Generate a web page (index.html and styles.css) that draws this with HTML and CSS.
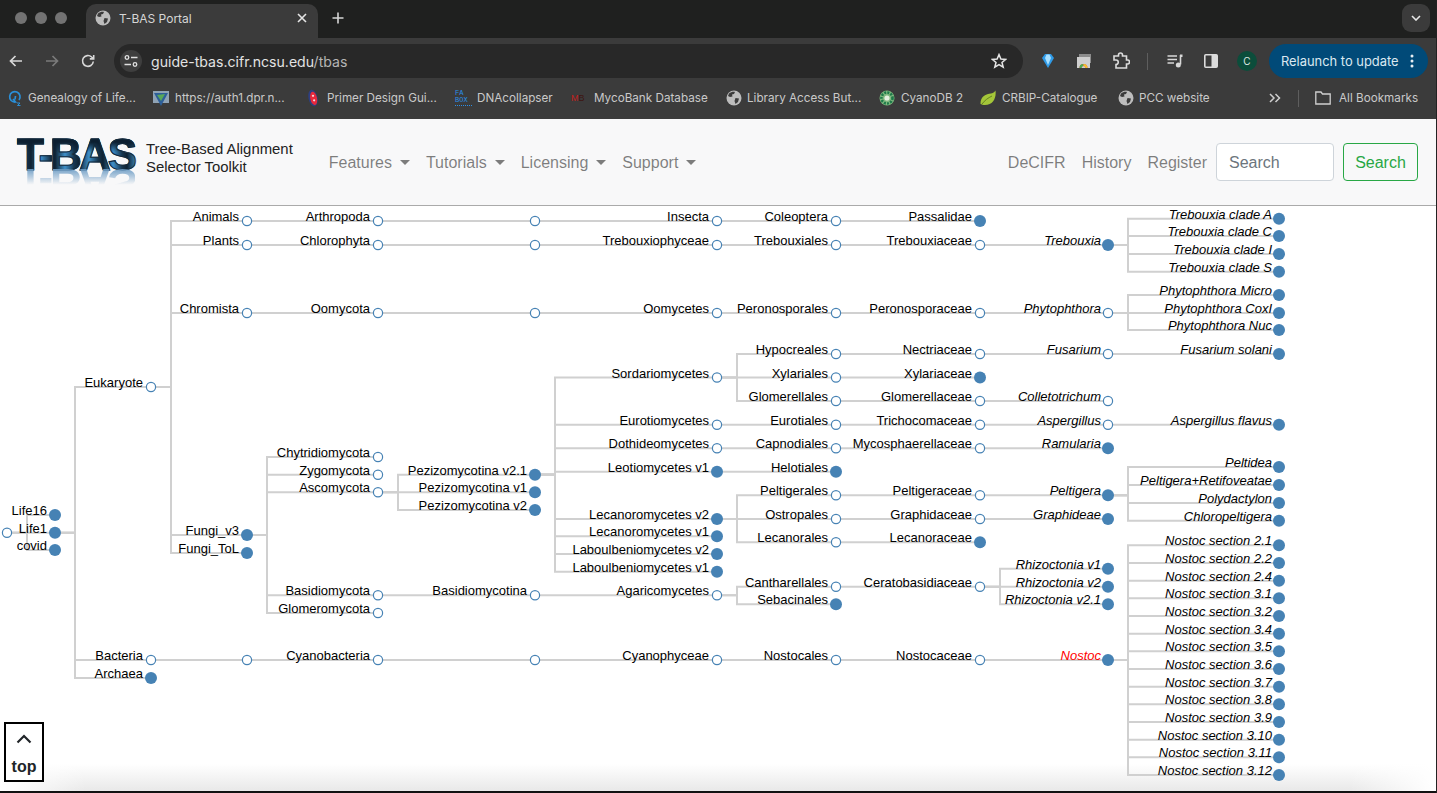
FILE: index.html
```html
<!DOCTYPE html>
<html>
<head>
    <title>T-BAS Portal</title>
    <link rel="stylesheet" href="styles.css">
</head>
<body>
    <svg class="defs" width="0" height="0">
        <symbol id="globe" viewBox="0 0 16 16">
            <circle cx="8" cy="8" r="7.5" fill="#bdbdbd"/>
            <path d="M3 3.5 C5 2 7 1.5 9 2 L8 4 L6 4.5 L6.5 6.5 L4 7 L2 6 Z M9.5 8 L13 8.5 L12 12 L9.5 14 L8.5 11 Z" fill="#3c3c3c"/>
        </symbol>
    </svg>

    <div class="tabstrip">
        <div class="lights"><i></i><i></i><i></i></div>
        <div class="tab">
            <svg class="ico16"><use href="#globe"/></svg>
            <span class="tab-title">T-BAS Portal</span>
            <svg class="tab-close" viewBox="0 0 10 10"><path d="M1 1 L9 9 M9 1 L1 9" stroke="#e6e6e6" stroke-width="1.6"/></svg>
        </div>
        <svg class="tab-new" viewBox="0 0 12 12"><path d="M6 0.5 V11.5 M0.5 6 H11.5" stroke="#d6d6d6" stroke-width="1.6"/></svg>
        <div class="tab-menu">
            <svg viewBox="0 0 10 6" width="10" height="6"><path d="M1 1 L5 5 L9 1" fill="none" stroke="#e6e6e6" stroke-width="1.6"/></svg>
        </div>
    </div>

    <div class="toolbar">
        <svg class="tool" viewBox="0 0 16 16"><path d="M14 8 H2.5 M7.5 3 L2.5 8 L7.5 13" fill="none" stroke="#d8d8d8" stroke-width="1.7"/></svg>
        <svg class="tool" viewBox="0 0 16 16"><path d="M2 8 H13.5 M8.5 3 L13.5 8 L8.5 13" fill="none" stroke="#7b7b7b" stroke-width="1.7"/></svg>
        <svg class="tool" viewBox="0 0 16 16"><path d="M13.3 8.5 A5.4 5.4 0 1 1 11.6 4 L13.5 5.6 M13.7 2 V5.9 H9.8" fill="none" stroke="#d8d8d8" stroke-width="1.6"/></svg>
        <div class="omnibox">
            <span class="site-btn">
                <svg viewBox="0 0 14 12" width="14" height="12"><circle cx="3" cy="2.5" r="1.8" fill="none" stroke="#e0e0e0" stroke-width="1.3"/><path d="M7 2.5 H13.5 M0.5 9.5 H7" stroke="#e0e0e0" stroke-width="1.4"/><circle cx="11" cy="9.5" r="1.8" fill="none" stroke="#e0e0e0" stroke-width="1.3"/></svg>
            </span>
            <span class="url">guide-tbas.cifr.ncsu.edu<span class="url-path">/tbas</span></span>
            <svg class="star" viewBox="0 0 16 16"><path d="M8 1.6 L9.9 6 L14.7 6.4 L11 9.5 L12.2 14.2 L8 11.7 L3.8 14.2 L5 9.5 L1.3 6.4 L6.1 6 Z" fill="none" stroke="#e6e6e6" stroke-width="1.5"/></svg>
        </div>
        <div class="ext">
            <svg class="ext-diamond" viewBox="0 0 14 16"><path d="M1 5 L4 1 H10 L13 5 L7 15 Z" fill="#2f9be8"/><path d="M4 5 L5.5 1.5 H8.5 L10 5 L7 12 Z" fill="#a9e0ff"/></svg>
            <svg class="ext-window" viewBox="0 0 16 16"><rect x="3" y="1" width="12" height="9" fill="#8c8c8c"/><rect x="1" y="4" width="13" height="11" fill="#cfcfcf"/><path d="M3.5 15 A4 4 0 0 1 11.5 15 H9.5 A2 2 0 0 0 5.5 15 Z" fill="#e8453c"/><path d="M3.5 15 A4 4 0 0 1 7.5 11 V13 A2 2 0 0 0 5.5 15 Z" fill="#4aae54"/><path d="M7.5 11 A4 4 0 0 1 11.5 15 H9.5 A2 2 0 0 0 7.5 13 Z" fill="#f5c02e"/></svg>
            <svg class="ext-puzzle" viewBox="0 0 18 18"><path d="M2 4 H6.5 V3 A2 2 0 0 1 10.5 3 V4 H14.5 V8 H15.5 A2 2 0 0 1 15.5 12 H14.5 V16 H4 V12.5 A2.2 2.2 0 0 0 4 8 H2 Z" fill="none" stroke="#dcdcdc" stroke-width="1.6"/></svg>
            <span class="ext-sep"></span>
            <svg class="ext-queue" viewBox="0 0 16 14"><path d="M0.5 2 H10 M0.5 5.5 H10 M0.5 9 H7" stroke="#d8d8d8" stroke-width="1.5"/><path d="M13.5 1 V10.5" stroke="#d8d8d8" stroke-width="1.6"/><path d="M13 0.5 H15.5 V3 H13 Z" fill="#d8d8d8"/><circle cx="11.3" cy="11" r="2.5" fill="#d8d8d8"/></svg>
            <svg class="ext-panel" viewBox="0 0 14 14"><rect x="0.8" y="0.8" width="12.4" height="12.4" rx="1" fill="none" stroke="#dcdcdc" stroke-width="1.6"/><rect x="7.5" y="1" width="5.5" height="12" fill="#dcdcdc"/></svg>
            <span class="avatar">C</span>
        </div>
        <div class="relaunch">
            <span>Relaunch to update</span>
            <svg viewBox="0 0 4 14" width="4" height="14"><circle cx="2" cy="2" r="1.5" fill="#e8eef3"/><circle cx="2" cy="7" r="1.5" fill="#e8eef3"/><circle cx="2" cy="12" r="1.5" fill="#e8eef3"/></svg>
        </div>
    </div>

    <div class="bookmarks">
        <a class="bm bm-1"><svg class="ico14" viewBox="0 0 14 16"><path d="M11 10 A5.2 5.2 0 1 0 7.5 12 L5 9 M7.5 6 L7 9.5" fill="none" stroke="#2a8fd8" stroke-width="1.7"/><path d="M9 13 H12 L9.5 15.5 H12.5" fill="none" stroke="#2a8fd8" stroke-width="1"/></svg>Genealogy of Life...</a>
        <a class="bm bm-2"><svg class="ico16" viewBox="0 0 16 16"><rect x="0" y="1" width="16" height="12" fill="#8fa3b5"/><path d="M1 3 L8 16 L15 3 Z" fill="#2d5f9a"/><path d="M4 5 L12 4 L8 11 Z" fill="#58a85a"/></svg>https://auth1.dpr.n...</a>
        <a class="bm bm-3"><svg class="ico12" viewBox="0 0 10 16"><ellipse cx="5" cy="8" rx="4" ry="7.5" fill="#2e3f80" transform="rotate(-12 5 8)"/><ellipse cx="5.5" cy="8.5" rx="3" ry="6" fill="#e8283c" transform="rotate(-12 5 8)"/><circle cx="5" cy="6" r="1" fill="#f6d8dc"/><circle cx="6" cy="10" r="1" fill="#f6d8dc"/></svg>Primer Design Gui...</a>
        <a class="bm bm-4"><span class="fabox">FA<br>BOX</span>DNAcollapser</a>
        <a class="bm bm-5"><span class="mb"><b>M</b><i>B</i></span>MycoBank Database</a>
        <a class="bm bm-6"><svg class="ico16"><use href="#globe"/></svg>Library Access But...</a>
        <a class="bm bm-7"><svg class="ico16" viewBox="0 0 16 16"><circle cx="8" cy="8" r="7.5" fill="#7fb77e"/><circle cx="8" cy="8" r="5.5" fill="none" stroke="#1e7a4a" stroke-width="2.6" stroke-dasharray="2 1.2"/><circle cx="8" cy="8" r="2.6" fill="#e6efe0"/></svg>CyanoDB 2</a>
        <a class="bm bm-8"><svg class="ico16" viewBox="0 0 16 16"><path d="M0.5 14 C0.5 6 6 4 11 3.5 C13.5 3 15 1.5 15.5 0.5 C16.5 8 13 15 5 15 C3 15 1.5 14.5 0.5 14 Z" fill="#a4c639"/><path d="M2 14 C5 10 8 8 12 6" fill="none" stroke="#55701a" stroke-width="0.8"/></svg>CRBIP-Catalogue</a>
        <a class="bm bm-9"><svg class="ico16"><use href="#globe"/></svg>PCC website</a>
        <svg class="bm-more" viewBox="0 0 12 10"><path d="M1 1 L5 5 L1 9 M6.5 1 L10.5 5 L6.5 9" fill="none" stroke="#cfcfcf" stroke-width="1.5"/></svg>
        <span class="bm-sep"></span>
        <a class="bm bm-all"><svg class="ico16" viewBox="0 0 16 14"><path d="M0.8 1 H6 L7.5 3 H15.2 V13 H0.8 Z" fill="none" stroke="#cfcfcf" stroke-width="1.3"/></svg>All Bookmarks</a>
    </div>

    <nav class="navbar">
        <a class="brand">
            <span class="logo">
                <span class="logo-main">T-BAS</span>
            </span>
            <span class="brand-text">Tree-Based Alignment<br>Selector Toolkit</span>
        </a>
        <ul class="nav-left">
            <li class="caret">Features</li>
            <li class="caret">Tutorials</li>
            <li class="caret">Licensing</li>
            <li class="caret">Support</li>
        </ul>
        <ul class="nav-right">
            <li>DeCIFR</li>
            <li>History</li>
            <li>Register</li>
        </ul>
        <form class="search">
            <input type="text" placeholder="Search">
            <button type="button">Search</button>
        </form>
    </nav>

    <div class="content">
        <div class="fade"></div>
        <svg id="tree" viewBox="0 206 1437 587" width="1437" height="587"></svg>
        <a class="top-btn">
            <svg viewBox="0 0 16 10" width="16" height="10"><path d="M1.5 8.5 L8 2 L14.5 8.5" fill="none" stroke="#212529" stroke-width="2.2"/></svg>
            <span>top</span>
        </a>
    </div>

    <script src="tree.js"></script>
</body>
</html>
```

FILE: styles.css
```css
* {
    box-sizing: border-box;
}
html, body {
    margin: 0;
    height: 793px;
    overflow: hidden;
}
body {
    font-family: "Liberation Sans", Arial, sans-serif;
    background-color: #fff;
    border-right: 1px solid #222;
}
.defs {
    position: absolute;
}
.ico16 {
    width: 16px;
    height: 16px;
    flex: none;
}
.ico14 {
    width: 14px;
    height: 16px;
    flex: none;
}
.ico12 {
    width: 12px;
    height: 18px;
    flex: none;
}

/* tab strip */
.tabstrip {
    height: 38px;
    background-color: #1f201f;
    display: flex;
    align-items: flex-end;
    padding-left: 15px;
}
.lights {
    display: flex;
    gap: 8px;
    width: 71px;
    align-self: center;
    margin-top: -2px;
}
.lights i {
    width: 12px;
    height: 12px;
    border-radius: 50%;
    background-color: #737373;
}
.tab {
    width: 232px;
    height: 34px;
    background-color: #3b3b3b;
    border-radius: 10px 10px 0 0;
    display: flex;
    align-items: center;
    padding: 0 11px 6px 9px;
    color: #d6d6d6;
}
.tab-title {
    font: 12px "Inter", sans-serif;
    margin-left: 8px;
    flex: 1;
}
.tab-close {
    width: 10px;
    height: 10px;
}
.tab-new {
    width: 12px;
    height: 12px;
    margin: 0 0 14px 14px;
}
.tab-menu {
    margin: 0 6px 6px auto;
    width: 28px;
    height: 28px;
    border-radius: 9px;
    background-color: #3b3b3b;
    display: flex;
    align-items: center;
    justify-content: center;
}

/* address bar */
.toolbar {
    height: 41px;
    background-color: #3b3b3b;
    display: flex;
    align-items: center;
    padding: 5px 8px 0 8px;
}
.tool {
    width: 16px;
    height: 16px;
    margin-right: 20px;
    flex: none;
}
.tool:nth-of-type(3) {
    margin-right: 18px;
}
.omnibox {
    width: 909px;
    height: 34px;
    background-color: #282828;
    border-radius: 17px;
    display: flex;
    align-items: center;
    padding: 0 16px 0 6px;
    flex: none;
}
.site-btn {
    width: 22px;
    height: 22px;
    border-radius: 50%;
    background-color: #3e3e3e;
    display: flex;
    align-items: center;
    justify-content: center;
}
.url {
    font: 14.1px "Inter", sans-serif;
    color: #e3e3e3;
    margin-left: 9px;
    flex: 1;
}
.url-path {
    color: #b5b5b5;
}
.star {
    width: 16px;
    height: 16px;
}
.ext {
    display: flex;
    align-items: center;
    width: 246px;
    height: 34px;
    padding-left: 18px;
    flex: none;
}
.ext-diamond {
    width: 14px;
    height: 16px;
}
.ext-window {
    width: 16px;
    height: 16px;
    margin-left: 21px;
}
.ext-puzzle {
    width: 18px;
    height: 18px;
    margin-left: 20px;
}
.ext-sep {
    width: 1px;
    height: 17px;
    background-color: #5e5e5e;
    margin-left: 17px;
}
.ext-queue {
    width: 16px;
    height: 14px;
    margin-left: 19px;
}
.ext-panel {
    width: 14px;
    height: 14px;
    margin-left: 21px;
}
.avatar {
    width: 20px;
    height: 20px;
    border-radius: 50%;
    background-color: #0b4d3b;
    color: #dfe9e5;
    font: 10px "Inter", sans-serif;
    display: flex;
    align-items: center;
    justify-content: center;
    margin-left: 19px;
}
.relaunch {
    width: 159px;
    height: 34px;
    border-radius: 17px;
    background-color: #014a78;
    color: #dbe8f1;
    font: 12.9px "Inter", sans-serif;
    display: flex;
    align-items: center;
    justify-content: space-between;
    padding: 0 14px 0 12px;
    flex: none;
}

/* bookmarks */
.bookmarks {
    height: 40px;
    background-color: #3b3b3b;
    display: flex;
    align-items: center;
    padding: 0 0 2px 8px;
}
.bm {
    display: flex;
    align-items: center;
    gap: 5px;
    font: 11.7px "Inter", sans-serif;
    color: #c9c9c9;
    white-space: nowrap;
}
.bm-1 { width: 145px; gap: 6px; }
.bm-2 { width: 154px; gap: 6px; }
.bm-3 { width: 148px; gap: 8px; }
.bm-4 { width: 116px; gap: 5px; }
.bm-5 { width: 155px; gap: 6px; }
.bm-6 { width: 153px; }
.bm-7 { width: 101px; gap: 6px; }
.bm-8 { width: 138px; gap: 6px; }
.bm-9 { width: 151px; }
.fabox {
    font: 7px/7px "Liberation Mono", monospace;
    color: #2a8fe8;
    width: 17px;
    border-bottom: 1px dotted #2a8fe8;
    padding-bottom: 1px;
}
.mb {
    font: 9px "Liberation Sans", sans-serif;
    width: 17px;
}
.mb b {
    color: #c0201c;
    font-weight: normal;
}
.mb i {
    color: #3e1512;
    font-style: normal;
}
.bm-more {
    width: 12px;
    height: 10px;
}
.bm-sep {
    width: 1px;
    height: 17px;
    background-color: #5e5e5e;
    margin: 0 16px 0 17px;
}
.bm-all {
    gap: 8px;
}

/* site navbar */
.navbar {
    height: 87px;
    background-color: #f8f8f9;
    border-bottom: 1px solid #aaa;
    display: flex;
    align-items: center;
    padding: 0 18px 0 17px;
    font-size: 16px;
    color: rgba(0, 0, 0, .5);
}
.brand {
    display: flex;
    align-items: flex-start;
    height: 52px;
    color: #212529;
}
.logo {
    position: relative;
    display: block;
    width: 118px;
    height: 52px;
    font: bold 44px/38px "Liberation Sans", sans-serif;
    white-space: nowrap;
}
.logo-main, .logo::after {
    display: block;
    width: 118px;
    letter-spacing: -3px;
    -webkit-background-clip: text;
    background-clip: text;
    color: transparent;
}
.logo-main {
    background-image: linear-gradient(180deg, #0c1f30 0, #0c1f30 16%, rgba(12, 31, 48, 0) 42%), repeating-linear-gradient(90deg, #3f8fc8 0, #17364f 9px, #0e2233 14px, #3f8fc8 24px);
    -webkit-text-stroke: 1px #13293b;
}
/* mirrored reflection under the logo */
.logo::after {
    content: "T-BAS";
    position: absolute;
    left: 0;
    top: 29px;
    transform: scaleY(-1);
    background-image: linear-gradient(0deg, #6d9cc4 8%, rgba(109, 156, 196, 0) 52%);
}
.brand-text {
    font-size: 14.9px;
    line-height: 18px;
    margin: 4px 0 0 11px;
    color: #222;
}
.nav-left, .nav-right {
    list-style: none;
    margin: 2px 0 0 0;
    padding: 0;
    display: flex;
}
.nav-left {
    margin-left: 36px;
}
.nav-left li {
    margin-right: 16px;
}
.caret::after {
    content: "";
    display: inline-block;
    margin-left: 8px;
    vertical-align: 3px;
    border-top: 5px solid rgba(0, 0, 0, .5);
    border-left: 5px solid transparent;
    border-right: 5px solid transparent;
}
.nav-right {
    margin-left: auto;
    gap: 16px;
}
.search {
    display: flex;
    gap: 9px;
    margin-left: 9px;
}
.search input {
    width: 118px;
    height: 38px;
    border: 1px solid #ced4da;
    border-radius: 4px;
    padding: 2px 12px 0;
    font: 16px "Liberation Sans", sans-serif;
}
.search input::placeholder {
    color: #6c757d;
}
.search button {
    width: 75px;
    height: 38px;
    border: 1px solid #28a745;
    border-radius: 4px;
    background: none;
    color: #28a745;
    font: 16px "Liberation Sans", sans-serif;
    padding-top: 2px;
}

/* tree */
.content {
    position: relative;
    height: 587px;
}
#tree {
    display: block;
    position: relative;
}
.link {
    fill: none;
    stroke: #d0d0d0;
    stroke-width: 2px;
}
.node {
    fill: #fff;
    stroke: steelblue;
    stroke-width: 1.2px;
}
.node.filled {
    fill: steelblue;
    stroke: none;
}
.label {
    font: 13px "Liberation Sans", Arial, sans-serif;
    text-anchor: end;
    fill: #000;
}
.label.genus {
    font-style: italic;
}
.label.hit {
    fill: red;
}
.fade {
    position: absolute;
    left: 0;
    right: 0;
    bottom: 0;
    height: 29px;
    border-bottom: 2px solid #111;
    background: linear-gradient(90deg, #fff, rgba(255, 255, 255, 0) 6%, rgba(255, 255, 255, 0) 94%, #fff), linear-gradient(180deg, rgba(225, 225, 225, 0), rgba(225, 225, 225, .75));
}
.top-btn {
    position: absolute;
    left: 4px;
    bottom: 11px;
    width: 40px;
    height: 60px;
    border: 2px solid #000;
    background-color: #fff;
    display: flex;
    flex-direction: column;
    align-items: center;
    padding-top: 10px;
    color: #212529;
    font-weight: bold;
    font-size: 16px;
}
.top-btn span {
    margin-top: 14px;
}
```

FILE: tree.js
```js
// x of each tree level, y is given per node
const levels = [7, 55, 151, 247, 378, 535, 717, 836, 980, 1108, 1279];

// [label, y, flags, children]  flags: f = filled, h = highlighted
const chain = (names, y, last) => {
    let node = last;
    for (let i = names.length - 1; i >= 0; i--) {
        node = [names[i], y, '', node ? [node] : []];
    }
    return node;
};

const nostocSections = ['2.1', '2.2', '2.4', '3.1', '3.2', '3.4', '3.5', '3.6', '3.7', '3.8', '3.9', '3.10', '3.11', '3.12']
    .map((s, i) => ['Nostoc section ' + s, 545.3 + i * 17.67, 'f', []]);

const fungi = ['Fungi_v3', 535, 'f', [
    ['Chytridiomycota', 457, '', []],
    ['Zygomycota', 474.7, '', []],
    ['Ascomycota', 492.3, '', [
        ['Pezizomycotina v2.1', 474.7, 'f', [
            ['Sordariomycetes', 377.5, '', [
                ['Hypocreales', 354, '', [
                    ['Nectriaceae', 354, '', [
                        ['Fusarium', 354, '', [['Fusarium solani', 354, 'f', []]]]
                    ]]
                ]],
                ['Xylariales', 377.5, '', [['Xylariaceae', 377.5, 'f', []]]],
                ['Glomerellales', 401, '', [
                    ['Glomerellaceae', 401, '', [['Colletotrichum', 401, '', []]]]
                ]]
            ]],
            ['Eurotiomycetes', 424.7, '', [
                ['Eurotiales', 424.7, '', [
                    ['Trichocomaceae', 424.7, '', [
                        ['Aspergillus', 424.7, '', [['Aspergillus flavus', 424.7, 'f', []]]]
                    ]]
                ]]
            ]],
            ['Dothideomycetes', 448.3, '', [
                ['Capnodiales', 448.3, '', [
                    ['Mycosphaerellaceae', 448.3, '', [['Ramularia', 448.3, 'f', []]]]
                ]]
            ]],
            ['Leotiomycetes v1', 471.7, 'f', [['Helotiales', 471.7, 'f', []]]],
            ['Lecanoromycetes v2', 519, 'f', [
                ['Peltigerales', 495.3, '', [
                    ['Peltigeraceae', 495.3, '', [
                        ['Peltigera', 495.3, 'f', [
                            ['Peltidea', 467, 'f', []],
                            ['Peltigera+Retifoveatae', 485, 'f', []],
                            ['Polydactylon', 503, 'f', []],
                            ['Chloropeltigera', 520.7, 'f', []]
                        ]]
                    ]]
                ]],
                ['Ostropales', 519, '', [
                    ['Graphidaceae', 519, '', [['Graphideae', 519, 'f', []]]]
                ]],
                ['Lecanorales', 542.3, '', [['Lecanoraceae', 542.3, 'f', []]]]
            ]],
            ['Lecanoromycetes v1', 536.3, 'f', []],
            ['Laboulbeniomycetes v2', 554, 'f', []],
            ['Laboulbeniomycetes v1', 571.7, 'f', []]
        ]],
        ['Pezizomycotina v1', 492.3, 'f', []],
        ['Pezizomycotina v2', 510, 'f', []]
    ]],
    ['Basidiomycota', 595.3, '', [
        ['Basidiomycotina', 595.3, '', [
            ['Agaricomycetes', 595.3, '', [
                ['Cantharellales', 586.7, '', [
                    ['Ceratobasidiaceae', 586.7, '', [
                        ['Rhizoctonia v1', 568.7, 'f', []],
                        ['Rhizoctonia v2', 586.7, 'f', []],
                        ['Rhizoctonia v2.1', 604.3, 'f', []]
                    ]]
                ]],
                ['Sebacinales', 604.3, 'f', []]
            ]]
        ]]
    ]],
    ['Glomeromycota', 613, '', []]
]];

const data = ['', 532.7, '', [
    ['Life16', 515, 'f', []],
    ['Life1', 532.7, 'f', [
        ['Eukaryote', 387, '', [
            chain(['Animals', 'Arthropoda', '', 'Insecta', 'Coleoptera'], 221, ['Passalidae', 221, 'f', []]),
            chain(['Plants', 'Chlorophyta', '', 'Trebouxiophyceae', 'Trebouxiales', 'Trebouxiaceae'], 245, ['Trebouxia', 245, 'f', [
                ['Trebouxia clade A', 218.7, 'f', []],
                ['Trebouxia clade C', 236, 'f', []],
                ['Trebouxia clade I', 254, 'f', []],
                ['Trebouxia clade S', 271.7, 'f', []]
            ]]),
            chain(['Chromista', 'Oomycota', '', 'Oomycetes', 'Peronosporales', 'Peronosporaceae'], 313, ['Phytophthora', 313, '', [
                ['Phytophthora Micro', 295, 'f', []],
                ['Phytophthora CoxI', 313, 'f', []],
                ['Phytophthora Nuc', 330, 'f', []]
            ]]),
            fungi,
            ['Fungi_ToL', 553, 'f', []]
        ]],
        chain(['Bacteria', '', 'Cyanobacteria', '', 'Cyanophyceae', 'Nostocales', 'Nostocaceae'], 660, ['Nostoc', 660, 'fh', nostocSections]),
        ['Archaea', 678, 'f', []]
    ]],
    ['covid', 550, 'f', []]
]];

const svg = document.getElementById('tree');
const links = [];
const nodes = [];

function walk(node, depth) {
    const x = levels[depth];
    const y = node[1];
    nodes.push({ label: node[0], x: x, y: y, flags: node[2], depth: depth });
    node[3].forEach(child => {
        // elbow link, the bend sits 20px right of the parent
        links.push(`M${x} ${y} H${x + 20} V${child[1]} H${levels[depth + 1]}`);
        walk(child, depth + 1);
    });
}
walk(data, 0);

function el(name, attrs) {
    const e = document.createElementNS('http://www.w3.org/2000/svg', name);
    Object.keys(attrs).forEach(k => e.setAttribute(k, attrs[k]));
    svg.appendChild(e);
    return e;
}

links.forEach(d => el('path', { class: 'link', d: d }));
nodes.forEach(n => {
    const filled = n.flags.includes('f');
    el('circle', { class: filled ? 'node filled' : 'node', cx: n.x, cy: n.y, r: filled ? 6 : 4.6 });
    if (n.label) {
        let cls = 'label';
        let dx = 8;
        if (n.depth >= 9) {
            cls += ' genus';
            dx = 7;
        }
        if (n.flags.includes('h')) cls += ' hit';
        el('text', { class: cls, x: n.x - dx, y: n.y }).textContent = n.label;
    }
});
```
